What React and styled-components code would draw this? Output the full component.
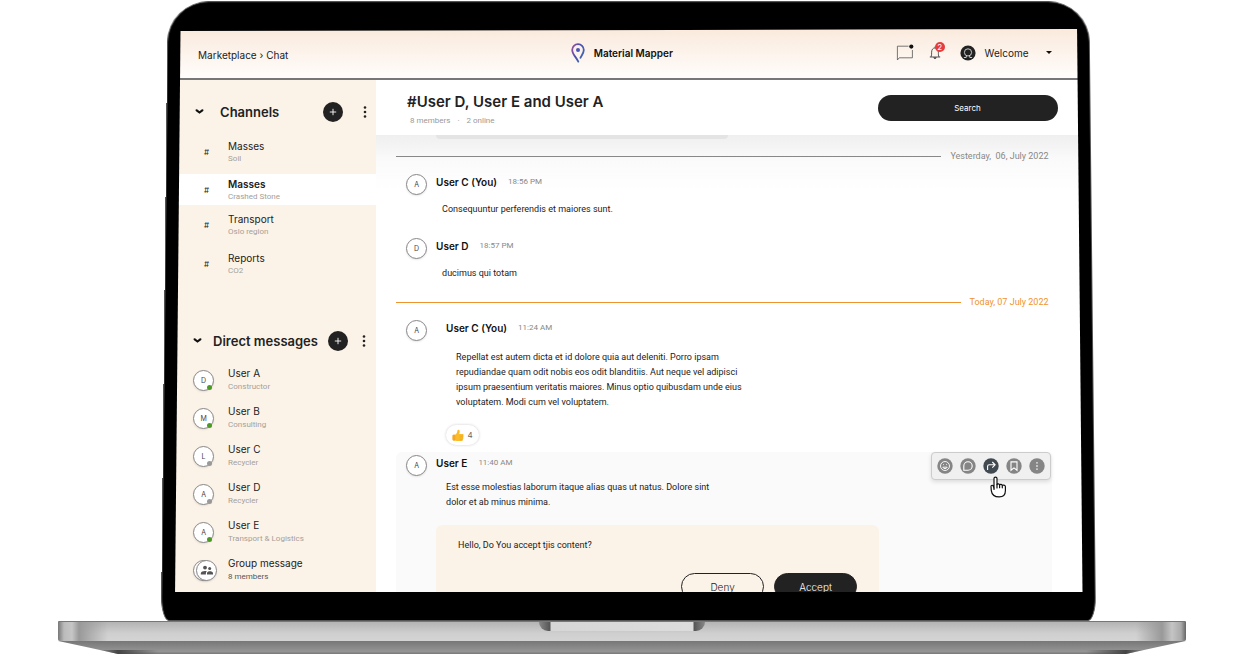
import React, { useState } from 'react';
import styled, { createGlobalStyle } from 'styled-components';

const channels = [
  { id: 1, name: 'Masses', info: 'Soil' },
  { id: 2, name: 'Masses', info: 'Crashed Stone' },
  { id: 3, name: 'Transport', info: 'Oslo region' },
  { id: 4, name: 'Reports', info: 'CO2' },
];

const people = [
  { name: 'User A', info: 'Constructor', letter: 'D', online: true },
  { name: 'User B', info: 'Consulting', letter: 'M', online: true },
  { name: 'User C', info: 'Recycler', letter: 'L', online: false },
  { name: 'User D', info: 'Recycler', letter: 'A', online: false },
  { name: 'User E', info: 'Transport & Logistics', letter: 'A', online: true },
];

// icons
const ChevronIcon = () => (
  <svg width="9" height="6" viewBox="0 0 9 6" fill="none" stroke="#111" strokeWidth="2.2">
    <path d="M1.7 1.3l2.8 2.2 2.8-2.2" strokeLinejoin="round" strokeLinecap="round" />
  </svg>
);

const PlusIcon = () => (
  <svg width="8" height="8" viewBox="0 0 8 8" stroke="#fff" strokeWidth="0.9">
    <path d="M4 0.8v6.4M0.8 4h6.4" />
  </svg>
);

const DotsIcon = () => (
  <svg width="4" height="12" viewBox="0 0 4 12" fill="#222">
    <circle cx="2" cy="1.5" r="1.3" />
    <circle cx="2" cy="6" r="1.3" />
    <circle cx="2" cy="10.5" r="1.3" />
  </svg>
);

const PinIcon = () => (
  <svg width="14" height="20" viewBox="0 0 14 20" fill="none">
    <defs>
      <linearGradient id="pin" x1="0" y1="0" x2="1" y2="0.6">
        <stop offset="0" stopColor="#a0509a" />
        <stop offset="0.5" stopColor="#4a4fb0" />
        <stop offset="1" stopColor="#3f66b5" />
      </linearGradient>
    </defs>
    <path
      d="M7.3 18.6C5.6 14.8 1.2 11 1.2 6.9A5.8 5.8 0 0 1 12.8 6.9C12.8 9.8 11 11.8 9.4 14.8"
      stroke="url(#pin)"
      strokeWidth="1.8"
      strokeLinecap="round"
    />
    <circle cx="7" cy="6.9" r="2" fill="#4a55b5" />
  </svg>
);

const ChatIcon = () => (
  <svg width="18" height="17" viewBox="0 0 18 17" fill="none" stroke="#555" strokeWidth="0.8">
    <path d="M12.5 2.2H1.4V16l1.8-2.2h13.2V6" />
    <circle cx="15.3" cy="2.6" r="2.1" fill="#111" stroke="none" />
  </svg>
);

const BellIcon = () => (
  <svg width="12" height="14" viewBox="0 0 12 14" fill="none" stroke="#444" strokeWidth="0.9">
    <path d="M6 0.6v1M0.8 11h10.4M2 11c.7-1.4.6-2.7.6-4.8C2.6 3.6 4 1.9 6 1.9s3.4 1.7 3.4 4.3c0 2.1-.1 3.4.6 4.8" />
    <path d="M4.8 11.3a1.2 1.3 0 0 0 2.4 0" fill="#555" />
  </svg>
);

const ProfileIcon = () => (
  <svg width="16" height="16" viewBox="0 0 16 16" fill="none" stroke="#eee" strokeWidth="0.8">
    <circle cx="8" cy="8" r="7.6" fill="#222" stroke="none" />
    <circle cx="8" cy="7.4" r="3.6" />
    <path d="M3.9 12.5h2.3l.3-1.8M12.1 12.5H9.8l-.3-1.8" />
  </svg>
);

const GroupIcon = () => (
  <svg width="14" height="11" viewBox="0 0 14 11" fill="#555">
    <circle cx="5" cy="2.6" r="1.9" />
    <circle cx="9.7" cy="3.4" r="1.5" />
    <path d="M.8 9.6V8.4C.8 6.7 3.2 6 5 6c.7 0 1.3.1 1.9.3C6 7 5.9 7.8 5.9 9.6zM7 9.6V8.3C7 6.8 8.6 6.3 9.8 6.3c1.4 0 3.2.6 3.2 2v1.3z" />
  </svg>
);

const ThumbIcon = () => (
  <svg width="12" height="13" viewBox="0 0 12 13">
    <path
      d="M.6 6.6c0-.6.4-.9.9-.9h1.8C4.6 5 5.3 3.4 5.4 1.6 5.5.3 7.6.3 7.7 2.2c0 1-.2 2-.5 2.9h3.3c1.4 0 1.5 1.6.6 1.9.8.4.7 1.6-.1 1.8.6.5.4 1.5-.3 1.7.3.8-.2 1.5-1.2 1.5H5.8c-1 0-1.7-.4-2.5-.6H1.5c-.5 0-.9-.3-.9-.9z"
      fill="#fbbc2c"
    />
    <path d="M.6 6.6c0-.6.4-.9.9-.9h1.8v5.7H1.5c-.5 0-.9-.3-.9-.9z" fill="#f5a623" />
    <path d="M7.6 7.1h3.5M7.6 8.9H11M7.6 10.6h3" stroke="#e8951c" strokeWidth="0.4" />
  </svg>
);

const actionIcons = {
  React: (
    <>
      <circle cx="8" cy="8" r="4.5" />
      <path d="M5.8 9.2a2.4 2.4 0 0 0 4.4 0zM6.5 6.3v.8M9.5 6.3v.8" />
    </>
  ),
  Reply: <path d="M3.8 12.2V8A4.2 4.2 0 1 1 8 12.2z" strokeWidth="1.1" />,
  Forward: <path d="M4.6 11.9V8.3c0-1 .5-1.5 1.5-1.5h5.8M9.3 4l2.8 2.8-2.8 2.8" strokeWidth="1.1" />,
  Save: <path d="M5 3.9h6v8.4L8 9.9l-3 2.4z" strokeWidth="1.1" />,
  More: <path d="M8 4.2v1.4M8 7.3v1.4M8 10.4v1.4" strokeWidth="1.4" />,
};

const HandIcon = () => (
  <svg width="17" height="22" viewBox="0 0 17 22" fill="#fff" stroke="#111" strokeWidth="1.2" strokeLinejoin="round" strokeLinecap="round">
    <path d="M4 12V2.6C4 .6 7 .6 7 2.6v6C7.2 7.4 9.4 7.5 9.6 9c.5-1 2.5-.8 2.7.5.6-.8 2.9-.5 3.1 1v4.3c0 3.7-2.4 6.1-6.2 6.1-4.3 0-7.4-2.5-7.9-6.3L1 10.4c0-1.5 2-1.5 2.3-.2z" />
    <path d="M4 12v1.5M7 8.5V12M9.6 9.2v2.5M12.3 9.8v2" fill="none" />
  </svg>
);

const SideHeading = ({ title, compact }) => (
  <HeadingRow $compact={compact}>
    <IconButton aria-label={'Toggle ' + title}>
      <ChevronIcon />
    </IconButton>
    <h2>{title}</h2>
    <RoundButton aria-label={'Add to ' + title}>
      <PlusIcon />
    </RoundButton>
    <IconButton aria-label={title + ' options'}>
      <DotsIcon />
    </IconButton>
  </HeadingRow>
);

const Message = ({ letter, name, time, indent, text, highlighted, children }) => (
  <MessageBox $highlighted={highlighted}>
    <Avatar>{letter}</Avatar>
    <MessageBody $indent={indent}>
      <MessageTop>
        <strong>{name}</strong>
        <time>{time}</time>
      </MessageTop>
      <MessageText $tight={highlighted} $indent={indent}>
        {text}
      </MessageText>
      {children}
    </MessageBody>
  </MessageBox>
);

const App = () => {
  const [active, setActive] = useState(2);

  return (
    <Page>
      <GlobalStyle />
      <Lid>
        <Screen>
          <TopBar>
            <Breadcrumb>
              <a href="#marketplace">Marketplace</a> › <a href="#chat">Chat</a>
            </Breadcrumb>
            <Brand>
              <PinIcon />
              Material Mapper
            </Brand>
            <TopActions>
              <IconButton aria-label="Messages">
                <ChatIcon />
              </IconButton>
              <BellButton aria-label="Notifications">
                <BellIcon />
                <Count>2</Count>
              </BellButton>
              <ProfileButton>
                <ProfileIcon />
                <span>Welcome</span>
                <Caret />
              </ProfileButton>
            </TopActions>
          </TopBar>
          <Columns>
            <Sidebar>
              <SideHeading title="Channels" />
              <ChannelList>
                {channels.map(c => (
                  <li key={c.id}>
                    <ChannelRow $active={c.id === active} onClick={() => setActive(c.id)}>
                      <Hash>#</Hash>
                      <RowText $bold={c.id === active}>
                        <b>{c.name}</b>
                        <small>{c.info}</small>
                      </RowText>
                    </ChannelRow>
                  </li>
                ))}
              </ChannelList>
              <SideHeading title="Direct messages" compact />
              <PeopleList>
                {people.map(p => (
                  <li key={p.name}>
                    <PersonRow>
                      <Avatar>
                        {p.letter}
                        <Status $online={p.online} />
                      </Avatar>
                      <RowText $tall>
                        <b>{p.name}</b>
                        <small>{p.info}</small>
                      </RowText>
                    </PersonRow>
                  </li>
                ))}
                <li>
                  <PersonRow>
                    <GroupAvatar>
                      <Avatar />
                      <Avatar>
                        <GroupIcon />
                      </Avatar>
                    </GroupAvatar>
                    <RowText $tall $dark>
                      <b>Group message</b>
                      <small>8 members</small>
                    </RowText>
                  </PersonRow>
                </li>
              </PeopleList>
            </Sidebar>
            <Chat>
              <ChatHeader>
                <div>
                  <h1>#User D, User E and User A</h1>
                  <Meta>
                    <span>8 members</span>
                    <span>·</span>
                    <span>2 online</span>
                  </Meta>
                </div>
                <SearchButton>Search</SearchButton>
              </ChatHeader>
              <Feed>
                <EarlierBubble />
                <DayLine>Yesterday,&nbsp; 06, July 2022</DayLine>
                <MessageGroup>
                  <Message
                    letter="A"
                    name="User C (You)"
                    time="18:56 PM"
                    text="Consequuntur perferendis et maiores sunt."
                  />
                  <Message letter="D" name="User D" time="18:57 PM" text="ducimus qui totam" />
                </MessageGroup>
                <DayLine $today>Today, 07 July 2022</DayLine>
                <MessageGroup $dense>
                  <Message
                    letter="A"
                    name="User C (You)"
                    time="11:24 AM"
                    indent
                    text="Repellat est autem dicta et id dolore quia aut deleniti. Porro ipsam repudiandae quam odit nobis eos odit blanditiis. Aut neque vel adipisci ipsum praesentium veritatis maiores. Minus optio quibusdam unde eius voluptatem. Modi cum vel voluptatem."
                  >
                    <Reaction aria-label="Thumbs up, 4">
                      <ThumbIcon />4
                    </Reaction>
                  </Message>
                  <Message
                    letter="A"
                    name="User E"
                    time="11:40 AM"
                    highlighted
                    text="Est esse molestias laborum itaque alias quas ut natus. Dolore sint dolor et ab minus minima."
                  >
                    <Offer>
                      <p>Hello, Do You accept tjis content?</p>
                      <OfferButtons>
                        <PillButton>Deny</PillButton>
                        <PillButton $filled>Accept</PillButton>
                      </OfferButtons>
                    </Offer>
                    <Toolbar>
                      {Object.keys(actionIcons).map(key => (
                        <IconButton key={key} aria-label={key}>
                          <svg width="16" height="16" viewBox="0 0 16 16" fill="none" stroke="#fff" strokeWidth="0.9">
                            <circle cx="8" cy="8" r="7.7" fill={key === 'Forward' ? '#414a50' : '#858585'} stroke="none" />
                            {actionIcons[key]}
                          </svg>
                        </IconButton>
                      ))}
                      <Pointer>
                        <HandIcon />
                      </Pointer>
                    </Toolbar>
                  </Message>
                </MessageGroup>
              </Feed>
            </Chat>
          </Columns>
        </Screen>
      </Lid>
      <Base>
        <Deck>
          <Notch />
        </Deck>
        <Underside />
      </Base>
    </Page>
  );
};

const small = 'Roboto, "Liberation Sans", sans-serif';

const GlobalStyle = createGlobalStyle`
  * { box-sizing: border-box; }
  body { margin: 0; background: #fff; }
  body, button { font-family: Inter, "Liberation Sans", sans-serif; color: #222; }
  button { border: 0; padding: 0; background: none; cursor: pointer; }
  h1, h2, p, ul { margin: 0; padding: 0; }
  ul { list-style: none; }
  a { color: inherit; text-decoration: none; }
  svg { display: block; flex: none; }
`;

const Page = styled.main`
  display: flex;
  flex-direction: column;
  height: 100vh;
  padding: 1px 0 9px;
  overflow: hidden;
`;

// laptop lid, a little narrower at the top
const Lid = styled.div`
  position: relative;
  flex: 1;
  min-height: 0;
  display: flex;
  width: 75.5%;
  margin-left: 13%;
  padding: 28px 14px 29px;
  &::before {
    content: '';
    position: absolute;
    inset: -9px 0 0;
    background: #000;
    border: 1px solid #555;
    border-radius: 42px 42px 8px 8px / 42px 42px 24px 24px;
    transform: perspective(1535px) rotateX(2deg);
    transform-origin: bottom;
  }
`;
const Screen = styled.div`
  position: relative;
  flex: 1;
  min-width: 0;
  display: flex;
  flex-direction: column;
  overflow: hidden;
  background: #fff;
  clip-path: polygon(0.6% 2px, 99.4% 0, 100% 100%, 0 100%);
`;

const TopBar = styled.header`
  display: grid;
  grid-template-columns: 1fr auto 1fr;
  align-items: center;
  height: 51px;
  padding: 0 31px 2px 23px;
  border-bottom: 2px solid #777;
  background: linear-gradient(#faeadd, #fffdfb);
`;
const Breadcrumb = styled.nav`
  padding-top: 4px;
  font-size: 10px;
`;
const Brand = styled.div`
  display: flex;
  align-items: center;
  gap: 9px;
  padding-right: 6px;
  font-size: 10px;
  font-weight: 600;
  color: #111;
`;
const TopActions = styled.div`
  display: flex;
  align-items: center;
  justify-content: flex-end;
  gap: 15px;
`;
const IconButton = styled.button`
  display: flex;
  align-items: center;
  justify-content: center;
`;
const BellButton = styled(IconButton)`
  position: relative;
  padding-right: 4px;
`;
const Count = styled.span`
  position: absolute;
  top: -4px;
  right: 0;
  width: 10px;
  height: 10px;
  border-radius: 50%;
  background: #e53c3c;
  color: #fff;
  font-size: 8px;
  line-height: 10px;
`;
const ProfileButton = styled(IconButton)`
  gap: 9px;
  font-size: 10px;
`;
const Caret = styled.i`
  margin-left: 8px;
  border: 3px solid transparent;
  border-top: 3px solid #111;
  border-bottom: 0;
`;

const Columns = styled.div`
  flex: 1;
  min-height: 0;
  display: flex;
`;
const Sidebar = styled.aside`
  flex: none;
  width: 201px;
  background: #fcf3e8;
`;
const HeadingRow = styled.div`
  display: flex;
  align-items: center;
  height: 20px;
  margin-top: ${({ $compact }) => ($compact ? '48px' : '22px')};
  padding: ${({ $compact }) => ($compact ? '0 10px 0 18px' : '0 9px 0 20px')};
  h2 {
    flex: 1;
    margin-left: ${({ $compact }) => ($compact ? '11px' : '16px')};
    font-size: 13px;
    font-weight: 600;
    white-space: nowrap;
  }
  ${IconButton}:last-child {
    margin-left: ${({ $compact }) => ($compact ? '14px' : '20px')};
  }
`;
const RoundButton = styled(IconButton)`
  width: 20px;
  height: 20px;
  border-radius: 50%;
  background: #222;
`;
const ChannelList = styled.ul`
  margin-top: 10px;
`;
const ChannelRow = styled.button`
  display: flex;
  align-items: center;
  gap: 18px;
  width: 100%;
  height: ${({ $active }) => ($active ? '31px' : '39px')};
  margin: ${({ $active }) => ($active ? '3px 0 0' : '0')};
  padding-left: 29px;
  background: ${({ $active }) => ($active ? '#fff' : 'none')};
  text-align: left;
`;
const Hash = styled.span`
  width: 6px;
  font-size: 8px;
`;
const RowText = styled.span`
  display: flex;
  flex-direction: column;
  font-size: 10px;
  line-height: 14px;
  b {
    font-weight: ${({ $bold }) => ($bold ? 600 : 400)};
  }
  small {
    font-family: ${small};
    font-size: 8px;
    line-height: ${({ $tall }) => ($tall ? '14px' : '12px')};
    color: ${({ $dark }) => ($dark ? '#555' : '#a5a09a')};
  }
`;
const PeopleList = styled.ul`
  margin-top: 10px;
`;
const PersonRow = styled.button`
  display: flex;
  align-items: center;
  gap: 14px;
  width: 100%;
  height: 38px;
  padding-left: 18px;
  text-align: left;
`;
const Avatar = styled.span`
  position: relative;
  flex: none;
  display: flex;
  align-items: center;
  justify-content: center;
  width: 21px;
  height: 21px;
  border: 1px solid #888;
  border-radius: 50%;
  background: #fff;
  box-shadow: 0 1px 2px rgba(0, 0, 0, 0.1);
  font-size: 7px;
  color: #444;
`;
const Status = styled.i`
  position: absolute;
  right: 1px;
  bottom: 0;
  width: 5px;
  height: 5px;
  border-radius: 50%;
  background: ${({ $online }) => ($online ? '#4b9a26' : '#999')};
`;
const GroupAvatar = styled.span`
  display: flex;
  margin-right: -3px;
  ${Avatar} + ${Avatar} {
    margin-left: -18px;
  }
`;

const Chat = styled.section`
  flex: 1;
  min-width: 0;
  display: flex;
  flex-direction: column;
`;
const ChatHeader = styled.header`
  flex: none;
  display: flex;
  align-items: center;
  justify-content: space-between;
  height: 55px;
  padding: 0 25px 0 31px;
  h1 {
    padding-top: 4px;
    font-size: 15px;
    line-height: 20px;
    font-weight: 600;
  }
`;
const Meta = styled.div`
  display: flex;
  gap: 7px;
  padding: 3px 3px 0;
  font-family: ${small};
  font-size: 8px;
  line-height: 12px;
  color: #999;
`;
const SearchButton = styled.button`
  width: 180px;
  height: 26px;
  border-radius: 13px;
  background: #222;
  color: #fff;
  font-size: 8px;
`;
const Feed = styled.div`
  flex: 1;
  min-height: 0;
  padding: 0 31px 0 20px;
  overflow: hidden;
  background: linear-gradient(#efefef, #fafafa 24px, #fff 55px);
`;
const EarlierBubble = styled.div`
  width: 292px;
  height: 4px;
  margin-left: 40px;
  border-radius: 0 0 6px 6px;
  background: #e4e4e4;
`;
const DayLine = styled.div`
  display: flex;
  align-items: center;
  gap: 9px;
  margin: ${({ $today }) => ($today ? '14px 0 11px' : '10px 0 11px')};
  padding-right: 3px;
  font-family: ${small};
  font-size: 9px;
  line-height: 14px;
  color: ${({ $today }) => ($today ? '#f0932e' : '#888')};
  &::before {
    content: '';
    flex: 1;
    border-top: 1px solid currentColor;
  }
`;
const MessageGroup = styled.div`
  display: flex;
  flex-direction: column;
  gap: ${({ $dense }) => ($dense ? '7px' : '21px')};
`;
const MessageBox = styled.article`
  position: relative;
  display: flex;
  align-items: flex-start;
  padding: ${({ $highlighted }) => ($highlighted ? '3px 0 0 10px' : '0 0 0 10px')};
  border-radius: 6px;
  background: ${({ $highlighted }) => ($highlighted ? '#fafafa' : 'none')};
`;
const MessageBody = styled.div`
  flex: 1;
  margin-left: ${({ $indent }) => ($indent ? '19px' : '9px')};
`;
const MessageTop = styled.div`
  display: flex;
  align-items: center;
  gap: 11px;
  font-size: 10px;
  line-height: 16px;
  color: #111;
  strong {
    font-weight: 600;
  }
  time {
    font-family: ${small};
    font-size: 8px;
    color: #888;
  }
`;
const MessageText = styled.p`
  max-width: ${({ $tight }) => ($tight ? '290px' : '305px')};
  margin-top: ${({ $tight, $indent }) => ($tight ? '9px' : $indent ? '14px' : '12px')};
  padding-left: ${({ $tight, $indent }) => ($tight || $indent ? '10px' : '6px')};
  font-family: ${small};
  font-size: 9px;
  line-height: 15px;
`;
const Reaction = styled.button`
  display: flex;
  align-items: center;
  justify-content: center;
  gap: 3px;
  width: 33px;
  height: 20px;
  margin-top: 15px;
  border-radius: 10px;
  background: #fff;
  box-shadow: 0 0 3px rgba(0, 0, 0, 0.2);
  font-size: 8px;
  color: #666;
`;
const Offer = styled.div`
  max-width: 443px;
  margin-top: 15px;
  padding: 12px 22px;
  border-radius: 6px;
  background: #fcf3e8;
  p {
    font-family: ${small};
    font-size: 9px;
    line-height: 16px;
  }
`;
const OfferButtons = styled.div`
  display: flex;
  justify-content: flex-end;
  gap: 10px;
  margin-top: 20px;
`;
const PillButton = styled.button`
  width: 83px;
  height: 27px;
  border: 1px solid #222;
  border-radius: 14px;
  background: ${({ $filled }) => ($filled ? '#222' : 'none')};
  color: ${({ $filled }) => ($filled ? '#fff' : '#222')};
  font-size: 10px;
  font-weight: 300;
`;
const Toolbar = styled.div`
  position: absolute;
  top: 0;
  right: 1px;
  display: flex;
  gap: 7px;
  padding: 5px;
  border: 1px solid #ccc;
  border-radius: 4px;
  background: #f0f0f0;
  box-shadow: 0 2px 4px rgba(0, 0, 0, 0.12);
`;
const Pointer = styled.span`
  position: absolute;
  top: 23px;
  left: 58px;
`;

const Base = styled.div`
  position: relative;
  width: 91%;
  height: 33px;
  margin-left: 4.7%;
`;
const Deck = styled.div`
  height: 20px;
  border-top: 1px solid #777;
  border-radius: 1px 1px 2px 2px;
  background:
    linear-gradient(90deg, #777, #bbb 6px, #c6c6c6 14px, #999 21px, transparent 50px, transparent calc(100% - 50px), #999 calc(100% - 24px), #c4c4c4 calc(100% - 14px), #aaa calc(100% - 5px), #666),
    linear-gradient(#b4b4b4, #cfcfcf 60%, #d4d4d4);
`;
const Notch = styled.div`
  width: 166px;
  height: 9px;
  margin: 0 auto;
  border-radius: 0 0 10px 10px;
  background: linear-gradient(90deg, #888, #555 11px, #d6d6d6 12px, #dcdcdc calc(100% - 12px), #555 calc(100% - 11px), #888);
`;
const Underside = styled.div`
  height: 13px;
  background: linear-gradient(90deg, transparent 40px, #444 60px, transparent 100px, transparent calc(100% - 100px), #444 calc(100% - 60px), transparent calc(100% - 40px)) 0 100% / 100% 4px no-repeat,
    linear-gradient(#777, #959595 80%, #777);
  clip-path: polygon(0 0, 100% 0, calc(100% - 28px) 6px, calc(100% - 60px) 100%, 60px 100%, 28px 6px);
`;

export default App;
